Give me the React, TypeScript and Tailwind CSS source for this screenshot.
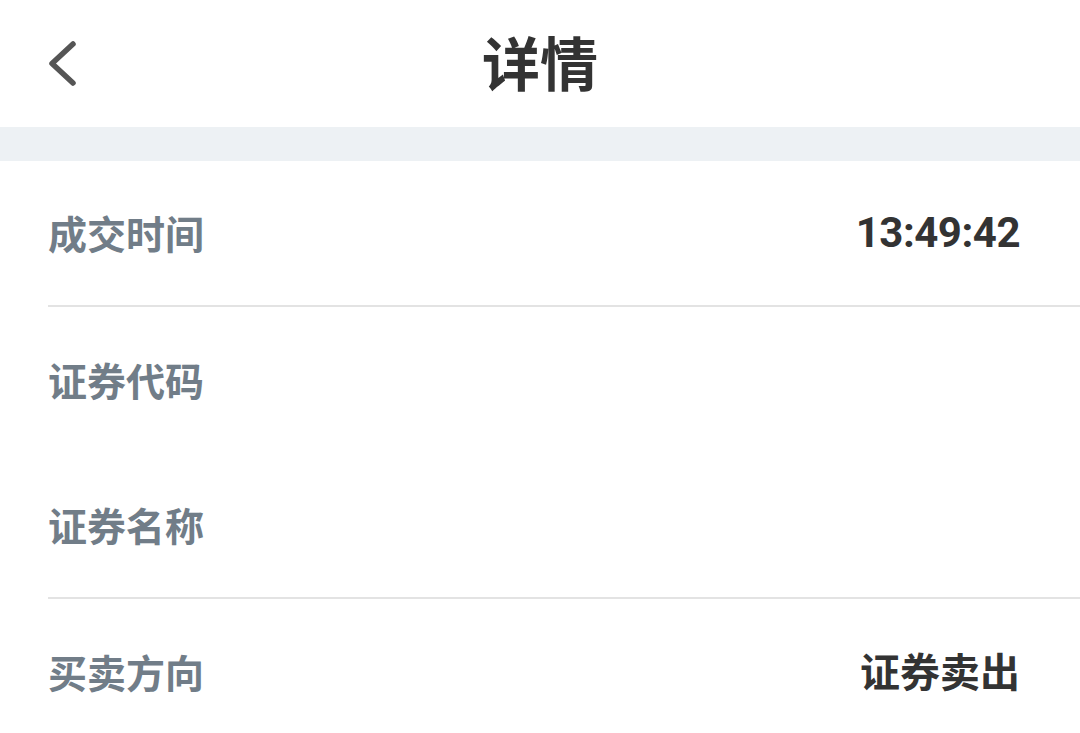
const ROWS: { label: string; value?: string; divider?: boolean; mono?: boolean }[] = [
  { label: "成交时间", value: "13:49:42", divider: true, mono: true },
  { label: "证券代码" },
  { label: "证券名称", divider: true },
  { label: "买卖方向", value: "证券卖出" },
];

function BackIcon() {
  return (
    <svg width="34" height="48" viewBox="0 0 34 48" fill="none" className="block">
      <path d="M27 4 L6 23.5 L27 43" stroke="#555555" strokeWidth="5.5" strokeLinecap="round" strokeLinejoin="round" />
    </svg>
  );
}

export default function App() {
  return (
    <div
      className="flex h-[733px] w-[1080px] flex-col overflow-hidden bg-white"
      style={{ fontFamily: '"Noto Sans", "Noto Sans CJK SC", sans-serif' }}
    >
      <header className="relative flex h-[127px] shrink-0 items-center justify-center">
        <button type="button" aria-label="返回" className="absolute left-[46px] top-[40px]">
          <BackIcon />
        </button>
        <h1 className="text-[58px] font-bold leading-none text-[#333333]">详情</h1>
      </header>

      <div className="h-[34px] shrink-0 bg-[#edf1f4]" />

      <div className="flex flex-col pl-12">
        {ROWS.map((row) => (
          <div
            key={row.label}
            className={`flex h-[146px] shrink-0 items-center justify-between pr-[60px] ${
              row.divider ? "border-b-2 border-[#e3e3e3]" : ""
            }`}
          >
            <span className="text-[39px] font-bold leading-none text-[#717d88]">{row.label}</span>
            {row.value && (
              <span
                className={`font-bold leading-none text-[#333333] ${
                  row.mono ? "text-[42px] tracking-[-0.5px]" : "text-[40px]"
                }`}
                style={row.mono ? { fontFamily: "Roboto, sans-serif" } : undefined}
              >
                {row.value}
              </span>
            )}
          </div>
        ))}
      </div>
    </div>
  );
}
